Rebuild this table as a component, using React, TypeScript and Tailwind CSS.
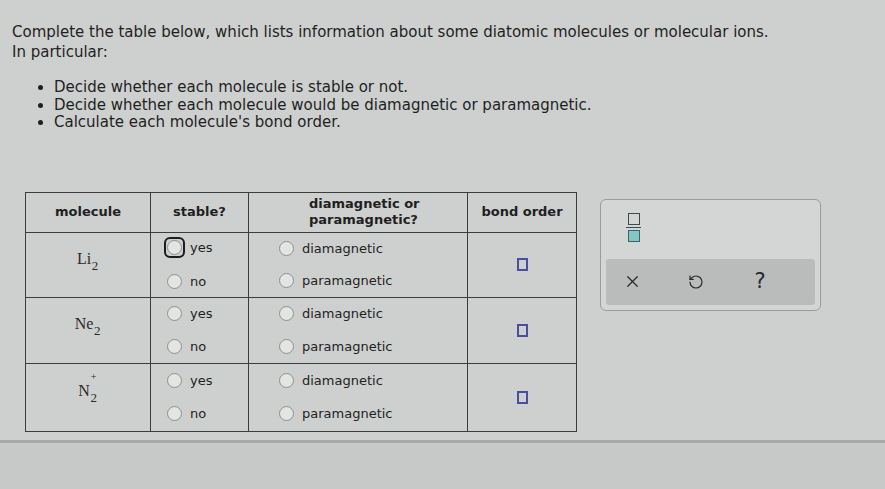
import { X, RotateCcw } from "lucide-react";

type Molecule = {
	symbol: string;
	charge?: string;
};

const molecules: Molecule[] = [
	{ symbol: "Li" },
	{ symbol: "Ne" },
	{ symbol: "N", charge: "+" },
];

const rowHeights = ["h-[65px]", "h-[66px]", "h-[68px]"];

const Radio = ({ focused = false }: { focused?: boolean }) => (
	<span className="relative inline-flex h-[15px] w-[15px] shrink-0 items-center justify-center">
		{focused && (
			<span className="absolute -inset-[3px] rounded-[6px] border-2 border-[#1c1c1c]" />
		)}
		<span className="h-[15px] w-[15px] rounded-full border border-[#8d908f] bg-[#e3e5e3]" />
	</span>
);

const Option = ({ label, focused = false }: { label: string; focused?: boolean }) => (
	<div className="flex items-center gap-[8px]">
		<Radio focused={focused} />
		<span>{label}</span>
	</div>
);

const Formula = ({ m }: { m: Molecule }) => (
	<span className="relative -top-[6px] font-['Liberation_Serif',serif] text-[16px] text-[#2a2a2a]">
		{m.symbol}
		<span className="relative inline-block w-[8px] align-baseline">
			{m.charge && (
				<span className="absolute left-[1px] -top-[10px] text-[10px]">{m.charge}</span>
			)}
			<span className="relative top-[6px] text-[13px]">2</span>
		</span>
	</span>
);

export default function App() {
	return (
		<div className="flex h-screen flex-col bg-[#cdd0ce] font-['DejaVu_Sans',sans-serif] text-[#1f1f1f]">
			<div className="pl-[12px] pt-[22px]">
				<p className="text-[15px] leading-[20px]">
					Complete the table below, which lists information about some diatomic molecules or molecular ions.
				</p>
				<p className="text-[15px] leading-[20px]">In particular:</p>
				<ul className="mt-[17px] list-disc pl-[42px] text-[15px] leading-[17.5px]">
					<li>Decide whether each molecule is stable or not.</li>
					<li>Decide whether each molecule would be diamagnetic or paramagnetic.</li>
					<li>Calculate each molecule's bond order.</li>
				</ul>

				<div className="mt-[60px] flex items-start">
					<table className="ml-[13px] w-[552px] border-collapse border border-[#3b3d3c] text-[13px]">
						<thead>
							<tr className="h-[40px] font-bold">
								<th className="w-[125px] border border-[#3b3d3c]">molecule</th>
								<th className="w-[98px] border border-[#3b3d3c]">stable?</th>
								<th className="w-[219px] border border-[#3b3d3c] text-left">
									<div className="pl-[60px] leading-[16px]">
										diamagnetic or
										<br />
										paramagnetic?
									</div>
								</th>
								<th className="border border-[#3b3d3c]">bond order</th>
							</tr>
						</thead>
						<tbody>
							{molecules.map((m, i) => (
								<tr key={m.symbol} className={rowHeights[i]}>
									<td className="border border-[#3b3d3c] text-center">
										<Formula m={m} />
									</td>
									<td className="border border-[#3b3d3c]">
										<div className="flex flex-col gap-[14px] pl-[16px]">
											<Option label="yes" focused={i === 0} />
											<Option label="no" />
										</div>
									</td>
									<td className="border border-[#3b3d3c]">
										<div className="flex flex-col gap-[13px] pl-[30px]">
											<Option label="diamagnetic" />
											<Option label="paramagnetic" />
										</div>
									</td>
									<td className="border border-[#3b3d3c]">
										<div className="flex justify-center">
											<span className="h-[13px] w-[11px] border-2 border-[#4a4ea0]" />
										</div>
									</td>
								</tr>
							))}
						</tbody>
					</table>

					<div className="ml-[23px] mt-[7px] flex h-[112px] w-[221px] flex-col rounded-[6px] border border-[#9a9d9b] bg-[#d3d6d4] p-[5px]">
						<div className="flex flex-1 flex-col items-start pl-[20px] pt-[8px]">
							<div className="flex flex-col items-center gap-[2px]">
								<span className="h-[12px] w-[12px] border-[1.5px] border-[#3c4a4a]" />
								<span className="h-[1.5px] w-[15px] bg-[#3c4a4a]" />
								<span className="h-[12px] w-[12px] border-[1.5px] border-[#2f6a6a] bg-[#86c6c2]" />
							</div>
						</div>
						<div className="flex h-[46px] items-center gap-[12px] rounded-[3px] bg-[#b9bcba]">
							<span className="flex w-[52px] justify-center">
								<X size={19} strokeWidth={1.5} className="text-[#2a2a2a]" />
							</span>
							<span className="flex w-[52px] justify-center">
								<RotateCcw size={16} strokeWidth={1.8} className="text-[#2a2a2a]" />
							</span>
							<span className="flex w-[52px] justify-center text-[21px] leading-none text-[#2a2a2a]">
								?
							</span>
						</div>
					</div>
				</div>
			</div>

			<div className="mt-[8px] flex-1 border-t-[3px] border-[#a7aaa8] bg-[#c6c9c7]" />
		</div>
	);
}
